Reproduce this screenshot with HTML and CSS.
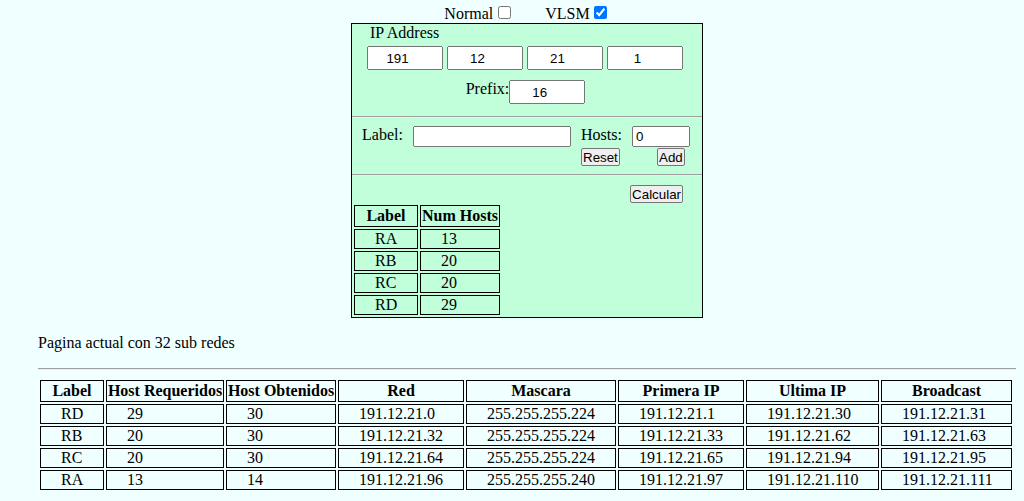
FILE: index.html
```html
<!DOCTYPE html>
<html lang="es">
<head>
<meta charset="utf-8">
<title>Subnetting VLSM</title>
<link rel="stylesheet" href="styles.css">
</head>
<body>
<div class="mode-row">
  <label class="mode">Normal<input type="checkbox" class="mode-check"></label>
  <label class="mode mode-vlsm">VLSM<input type="checkbox" class="mode-check mode-check-vlsm" checked></label>
</div>

<div class="panel">
  <div class="ip-title">IP Address</div>
  <div class="octets">
    <input type="number" class="octet" value="191">
    <input type="number" class="octet" value="12">
    <input type="number" class="octet" value="21">
    <input type="number" class="octet" value="1">
  </div>
  <div class="prefix-row">
    <span class="field-label">Prefix:</span>
    <input type="number" class="octet" value="16">
  </div>
  <hr class="panel-sep">
  <div class="add-grid">
    <span class="field-label">Label:</span>
    <input type="text" class="text-input label-input" value="">
    <span class="field-label">Hosts:</span>
    <input type="text" class="text-input hosts-input" value="0">
    <button class="btn btn-reset">Reset</button>
    <button class="btn btn-add">Add</button>
  </div>
  <hr class="panel-sep">
  <div class="calc-row"><button class="btn">Calcular</button></div>
  <table class="grid-table hosts-table">
    <thead>
      <tr><th class="hc-label">Label</th><th class="hc-num">Num Hosts</th></tr>
    </thead>
    <tbody>
      <tr><td>RA</td><td>13</td></tr>
      <tr><td>RB</td><td>20</td></tr>
      <tr><td>RC</td><td>20</td></tr>
      <tr><td>RD</td><td>29</td></tr>
    </tbody>
  </table>
</div>

<div class="results">
  <p class="summary">Pagina actual con 32 sub redes</p>
  <hr class="results-sep">
  <table class="grid-table subnets">
    <thead>
      <tr>
        <th class="c-label">Label</th>
        <th class="c-req">Host Requeridos</th>
        <th class="c-obt">Host Obtenidos</th>
        <th class="c-red">Red</th>
        <th class="c-mask">Mascara</th>
        <th class="c-first">Primera IP</th>
        <th class="c-last">Ultima IP</th>
        <th class="c-bcast">Broadcast</th>
      </tr>
    </thead>
    <tbody>
      <tr><td>RD</td><td>29</td><td>30</td><td>191.12.21.0</td><td>255.255.255.224</td><td>191.12.21.1</td><td>191.12.21.30</td><td>191.12.21.31</td></tr>
      <tr><td>RB</td><td>20</td><td>30</td><td>191.12.21.32</td><td>255.255.255.224</td><td>191.12.21.33</td><td>191.12.21.62</td><td>191.12.21.63</td></tr>
      <tr><td>RC</td><td>20</td><td>30</td><td>191.12.21.64</td><td>255.255.255.224</td><td>191.12.21.65</td><td>191.12.21.94</td><td>191.12.21.95</td></tr>
      <tr><td>RA</td><td>13</td><td>14</td><td>191.12.21.96</td><td>255.255.255.240</td><td>191.12.21.97</td><td>191.12.21.110</td><td>191.12.21.111</td></tr>
    </tbody>
  </table>
</div>
</body>
</html>
```

FILE: styles.css
```css
html, body {
  margin: 0;
  padding: 0;
}
body {
  background: #f0ffff;
  color: #000;
  font-family: "Liberation Serif", "Times New Roman", serif;
  font-size: 16px;
  line-height: 18px;
}

/* top mode selector */
.mode-row {
  width: 352px;
  margin-left: 351px;
  height: 23px;
  display: flex;
  justify-content: center;
  align-items: flex-end;
  padding-right: 3px;
  box-sizing: border-box;
}
.mode {
  display: flex;
  align-items: flex-end;
}
.mode-vlsm {
  margin-left: 34px;
}
.mode-check {
  width: 13px;
  height: 13px;
  margin: 0 0 4px 5px;
}
.mode-check-vlsm {
  margin-left: 4px;
}

/* green panel */
.panel {
  width: 352px;
  margin-left: 351px;
  box-sizing: border-box;
  border: 1px solid #000;
  background: #c1ffda;
}
.ip-title {
  padding-left: 18px;
  height: 18px;
}
.octets {
  display: flex;
  gap: 4px;
  padding-left: 15px;
  margin-top: 4px;
}
input {
  font-family: "Liberation Sans", Arial, sans-serif;
  font-size: 13.33px;
  margin: 0;
}
.octet {
  width: 76px;
  height: 24px;
  box-sizing: border-box;
  text-align: center;
}
.prefix-row {
  display: flex;
  justify-content: center;
  align-items: flex-start;
  margin-top: 10px;
  padding-bottom: 4px;
  padding-right: 3px;
}
.field-label {
  display: block;
}
.panel-sep {
  margin: 8px 0;
  border: 0;
  border-top: 1px solid #a0a0a0;
  border-bottom: 1px solid #eeeeee;
  height: 0;
}

.add-grid {
  display: grid;
  grid-template-columns: 51px 168px 51px 58px;
  grid-template-rows: 21px 18px;
  row-gap: 1px;
  padding-left: 10px;
  align-items: start;
}
.text-input {
  height: 21px;
  box-sizing: border-box;
}
.label-input {
  width: 158px;
}
.hosts-input {
  width: 58px;
}
.btn {
  font-family: "Liberation Sans", Arial, sans-serif;
  font-size: 13.33px;
  line-height: 15px;
  height: 18px;
  padding: 0 1px;
  border: 1px solid #767676;
  border-radius: 2px;
  background: #efefef;
  color: #000;
  margin: 0;
}
.btn-reset {
  grid-column: 3;
  justify-self: start;
}
.btn-add {
  grid-column: 4;
  justify-self: start;
  margin-left: 25px;
}
.calc-row {
  display: flex;
  justify-content: flex-end;
  padding-right: 19px;
  padding-top: 1px;
  height: 19px;
  box-sizing: border-box;
}

/* tables */
.grid-table {
  border-collapse: separate;
  border-spacing: 2px;
  table-layout: fixed;
}
.grid-table th,
.grid-table td {
  border: 1px solid #000;
  box-sizing: border-box;
  line-height: 18px;
  white-space: nowrap;
}
.grid-table th {
  padding: 1px 0;
  text-align: center;
  font-weight: bold;
}
.grid-table td {
  padding: 0 0 0 20px;
  text-align: left;
}
.hosts-table {
  width: 150px;
}
.hc-label { width: 64px; }
.hc-num { width: 80px; }

/* results */
.results {
  margin: 0 8px 0 38px;
}
.summary {
  margin: 16px 0;
}
.results-sep {
  margin: 8px 0;
  border: 0;
  border-top: 1px solid #a0a0a0;
  border-bottom: 1px solid #eeeeee;
  height: 0;
}
.subnets {
  width: 976px;
}
.c-label { width: 64px; }
.c-req { width: 118px; }
.c-obt { width: 110px; }
.c-red { width: 126px; }
.c-mask { width: 150px; }
.c-first { width: 126px; }
.c-last { width: 133px; }
.c-bcast { width: 131px; }
```
